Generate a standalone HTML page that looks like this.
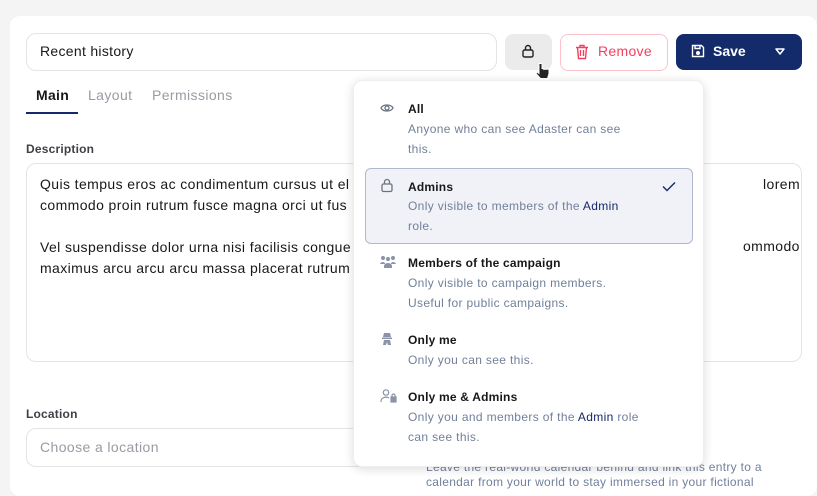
<!DOCTYPE html>
<html><head><style>
*{box-sizing:border-box;margin:0;padding:0}
body{width:817px;height:487px;overflow:hidden;background:#f4f4f5;font-family:"Liberation Sans",sans-serif;position:relative}
.a{position:absolute}
.card{left:10px;top:16px;width:807px;height:480px;background:#fff;border-radius:10px}
.inp{border:1px solid #e4e4e7;border-radius:10px;background:#fff}
.lbl{font-size:12px;font-weight:bold;color:#3f3f46;letter-spacing:.2px}
.ta{font-size:14px;color:#18181b;line-height:21px;letter-spacing:.4px}
.dd{left:353px;top:80px;width:351px;height:387px;background:#fff;border-radius:9px;box-shadow:0 2px 10px rgba(0,0,0,.14);border:1px solid #eee}
.t{font-size:12px;font-weight:bold;color:#18181b;position:absolute;left:54px;letter-spacing:.2px}
.d{font-size:12px;color:#71809a;position:absolute;left:54px;line-height:20px;letter-spacing:.35px}
.d b{font-weight:normal;color:#15296b}
.ic{position:absolute;left:26px}
</style></head><body>
<div class="a card"></div>
<div class="a inp" style="left:26px;top:33px;width:471px;height:38px"></div>
<div class="a" style="left:40px;top:43px;font-size:14px;color:#18181b;letter-spacing:.3px">Recent history</div>
<div class="a" style="left:505px;top:34px;width:47px;height:36px;background:#ebebeb;border-radius:8px"></div>
<svg class="a" style="left:520px;top:43px" width="16" height="16" viewBox="0 0 16 16" fill="none" stroke="#222" stroke-width="1.4"><rect x="3" y="7" width="10" height="7" rx="1.5"/><path d="M5.5 7V5a2.5 2.5 0 0 1 5 0v2"/></svg>
<svg class="a" style="left:535px;top:62px" width="16" height="20" viewBox="0 0 16 20"><path d="M4 1.5v10l-2-1.5-1 1.5 4.5 5h7l1.5-5v-4l-2-.5-1 .5-1-.5-1 .5V7l-2-.5V1.5z" fill="#222" stroke="#fff" stroke-width="1"/></svg>
<div class="a" style="left:560px;top:34px;width:108px;height:37px;border:1px solid #fbc2cb;border-radius:8px"></div>
<svg class="a" style="left:575px;top:44px" width="14" height="16" viewBox="0 0 14 16" fill="none" stroke="#f43f5e" stroke-width="1.4"><path d="M1 3.5h12M5 3.5V1.5h4v2M2.5 3.5l1 11h7l1-11M5.5 6v6M8.5 6v6"/></svg>
<div class="a" style="left:598px;top:43px;font-size:14px;color:#f43f5e;letter-spacing:.3px">Remove</div>
<div class="a" style="left:676px;top:34px;width:126px;height:36px;background:#132a6b;border-radius:8px"></div>
<svg class="a" style="left:691px;top:44px" width="14" height="14" viewBox="0 0 14 14" fill="none" stroke="#fff" stroke-width="1.4"><path d="M1.5 1.5h9l2 2v9h-11z"/><path d="M4 1.5v3h5v-3"/><circle cx="7" cy="9" r="1.3" fill="#fff"/></svg>
<div class="a" style="left:713px;top:43px;font-size:14px;font-weight:bold;color:#fff">Save</div>
<svg class="a" style="left:775px;top:48px" width="10" height="7"><path d="M1 1h8L5 6z" fill="none" stroke="#fff" stroke-width="1.5" stroke-linejoin="round"/></svg>
<div class="a" style="left:36px;top:87px;font-size:14px;font-weight:bold;color:#18181b;letter-spacing:.3px">Main</div>
<div class="a" style="left:26px;top:112px;width:52px;height:2px;background:#132a6b"></div>
<div class="a" style="left:88px;top:87px;font-size:14px;color:#9a9aa3;letter-spacing:.4px">Layout</div>
<div class="a" style="left:152px;top:87px;font-size:14px;color:#9a9aa3;letter-spacing:.4px">Permissions</div>
<div class="a lbl" style="left:26px;top:142px">Description</div>
<div class="a inp" style="left:26px;top:163px;width:776px;height:199px"></div>
<div class="a ta" style="left:40px;top:174px;white-space:nowrap">Quis tempus eros ac condimentum cursus ut el<br>commodo proin rutrum fusce magna orci ut fus<br><br>Vel suspendisse dolor urna nisi facilisis congue<br>maximus arcu arcu arcu massa placerat rutrum</div>
<div class="a ta" style="left:763px;top:174px">lorem</div>
<div class="a ta" style="left:743px;top:236px">ommodo</div>
<div class="a lbl" style="left:26px;top:407px">Location</div>
<div class="a inp" style="left:26px;top:428px;width:340px;height:39px"></div>
<div class="a" style="left:40px;top:439px;font-size:14px;color:#9a9aa3;letter-spacing:.4px">Choose a location</div>
<div class="a" style="left:426px;top:460px;font-size:12px;color:#71809a;line-height:15px;white-space:nowrap;letter-spacing:.3px">Leave the real-world calendar behind and link this entry to a<br>calendar from your world to stay immersed in your fictional</div>
<div class="a dd">
<svg class="ic" style="top:21px" width="14" height="12" viewBox="0 0 14 12" fill="none" stroke="#6b7280" stroke-width="1.3"><path d="M1 6c2-4 10-4 12 0-2 4-10 4-12 0z"/><circle cx="7" cy="6" r="2"/></svg>
<div class="t" style="top:21px">All</div>
<div class="d" style="top:38px">Anyone who can see Adaster can see<br>this.</div>
<div class="a" style="left:11px;top:87px;width:328px;height:76px;background:#f0f2f7;border:1px solid #aeb8cf;border-radius:6px"></div>
<svg class="ic" style="top:97px" width="14" height="15" viewBox="0 0 14 15" fill="none" stroke="#6b7280" stroke-width="1.3"><rect x="2" y="6" width="10" height="7.5" rx="1.5"/><path d="M4.5 6V4a2.5 2.5 0 0 1 5 0v2"/></svg>
<div class="t" style="top:99px">Admins</div>
<div class="d" style="top:115px">Only visible to members of the <b>Admin</b><br>role.</div>
<svg class="a" style="left:308px;top:100px" width="14" height="11"><path d="M1 5.5l4 4 8-8" fill="none" stroke="#132a6b" stroke-width="1.4"/></svg>
<svg class="ic" style="top:174px" width="16" height="14" viewBox="0 0 16 14" fill="#8a93a8"><circle cx="3" cy="3" r="2"/><circle cx="13" cy="3" r="2"/><circle cx="8" cy="4" r="2"/><path d="M0 9a3 3 0 0 1 5-1v1H0zM11 8a3 3 0 0 1 5 1h-5zM4 13v-2a4 3 0 0 1 8 0v2z"/></svg>
<div class="t" style="top:175px">Members of the campaign</div>
<div class="d" style="top:192px">Only visible to campaign members.<br>Useful for public campaigns.</div>
<svg class="ic" style="top:251px" width="14" height="14" viewBox="0 0 14 14" fill="#8a93a8"><path d="M4 1h6l1 4H3z"/><rect x="2" y="5.5" width="10" height="1.5"/><path d="M3 13l1-5h6l1 5h-3l-1-3-1 3z"/></svg>
<div class="t" style="top:252px">Only me</div>
<div class="d" style="top:269px">Only you can see this.</div>
<svg class="ic" style="top:308px" width="17" height="14" viewBox="0 0 17 14" fill="none" stroke="#8a93a8" stroke-width="1.2"><circle cx="6" cy="3.5" r="2.7"/><path d="M1 13v-1a5 4 0 0 1 8-3"/><rect x="11" y="8" width="5" height="5" fill="#8a93a8"/><path d="M12 8V6.5a1.5 1.5 0 0 1 3 0V8"/></svg>
<div class="t" style="top:309px">Only me &amp; Admins</div>
<div class="d" style="top:326px">Only you and members of the <b>Admin</b> role<br>can see this.</div>
</div>
</body></html>
